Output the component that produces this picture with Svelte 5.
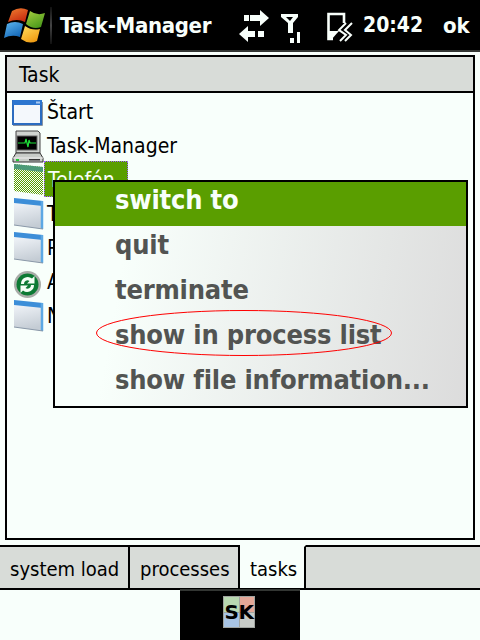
<script>
  const rows = [
    { icon: 'win', label: 'Štart' },
    { icon: 'pc', label: 'Task-Manager' },
    { icon: 'sel', label: 'Telefón', selected: true },
    { icon: 'page', label: 'T' },
    { icon: 'page', label: 'P' },
    { icon: 'sync', label: 'A' },
    { icon: 'page', label: 'N' }
  ];
  const items = ['quit', 'terminate', 'show in process list', 'show file information...'];
</script>

<div class="screen">
  <header class="top">
    <svg class="logo" width="50" height="50" viewBox="0 0 50 50">
      <defs>
        <linearGradient id="lr" x1="0" y1="0" x2="0.6" y2="1"><stop offset="0" stop-color="#f08030" /><stop offset="1" stop-color="#c82c10" /></linearGradient>
        <linearGradient id="lg" x1="0" y1="0" x2="0.6" y2="1"><stop offset="0" stop-color="#a8d040" /><stop offset="1" stop-color="#4c9a1c" /></linearGradient>
        <linearGradient id="lb" x1="0" y1="0" x2="0.6" y2="1"><stop offset="0" stop-color="#60b8f0" /><stop offset="1" stop-color="#1468b8" /></linearGradient>
        <linearGradient id="ly" x1="0" y1="0" x2="0.6" y2="1"><stop offset="0" stop-color="#ffe060" /><stop offset="1" stop-color="#f09c14" /></linearGradient>
      </defs>
      <path d="M12 11 Q20 6 28 10 L25 22 Q17 18 8 22Z" fill="url(#lr)" />
      <path d="M30 11 Q37 16 45 13 L41 27 Q33 30 26 24Z" fill="url(#lg)" />
      <path d="M7 24 Q15 20 23 24 L20 37 Q12 34 4 38Z" fill="url(#lb)" />
      <path d="M25 26 Q32 31 40 29 L37 41 Q29 45 21 39Z" fill="url(#ly)" />
    </svg>
    <i class="sep"></i>
    <h1>Task-Manager</h1>
    <svg class="arrows" width="32" height="36" viewBox="0 0 32 36" fill="#f8fffb">
      <path d="M6 8 H11 V14 H6Z M12 8 H22 V3 L31 11 L22 19 V14 H12Z" />
      <path d="M1 27 L10 19 V24 H17 V30 H10 V35Z M20 24 H26 V30 H20Z" />
    </svg>
    <svg class="signal" width="22" height="36" viewBox="0 0 22 36" fill="#f8fffb">
      <path d="M1 7 H18 V10 L13 16 V26 H8 V16 L1 10Z M6 10 L10 14 L13 10Z" fill-rule="evenodd" />
      <rect x="10" y="31" width="4" height="5" />
      <rect x="17" y="25" width="3" height="11" />
    </svg>
    <svg class="batt" width="28" height="36" viewBox="0 0 28 36" fill="none">
      <path d="M19 16 V7 H3.500 V32 H8" stroke="#f8fffb" stroke-width="2.600" />
      <path d="M3 24 H14 L6 33 H3Z" fill="#f8fffb" />
      <path d="M21 16 L14 23 L21 28 L15 34 M27 16 L20 23 L26 28 L20 34" stroke="#f8fffb" stroke-width="2" />
    </svg>
    <span class="clock">20:42</span>
    <span class="ok">ok</span>
  </header>

  <section class="panel">
    <div class="head">Task</div>
    <ul class="tree">
      {#each rows as r}
        <li>
          <span class="ic">
            {#if r.icon === 'win'}
              <svg width="32" height="34" viewBox="0 0 32 34">
                <rect x="1" y="6" width="28" height="23" fill="#f4f8fc" stroke="#2c6cc0" stroke-width="2" />
                <rect x="1" y="5" width="29" height="5" fill="#2c76d0" />
                <rect x="24" y="6.500" width="4" height="2" fill="#a8c8f0" />
                <path d="M1 30.500 H30.500 V7" stroke="#8a94a0" fill="none" />
              </svg>
            {:else if r.icon === 'pc'}
              <svg width="32" height="34" viewBox="0 0 32 34">
                <path d="M4 2 H26 L28 4 V24 H4Z" fill="#d0d4d0" stroke="#444" />
                <rect x="5" y="7" width="20" height="14" fill="#000" stroke="#666" />
                <path d="M6 14 H13 L14 10 L16 18 L17 11 L18 14 H24" stroke="#1fe03a" stroke-width="1.200" fill="none" />
                <path d="M1 29 L4 24 H28 L31 29 V33 H1Z" fill="#c8ccc8" stroke="#333" />
                <path d="M1 29 H31" stroke="#f0f0f0" />
                <rect x="4" y="30" width="3" height="2" fill="#2c3" />
                <rect x="17" y="30" width="11" height="1.500" fill="#333" />
              </svg>
            {:else if r.icon === 'sel'}
              <svg width="32" height="34" viewBox="0 0 32 34">
                <defs>
                  <pattern id="dots" width="2" height="2" patternUnits="userSpaceOnUse">
                    <rect width="2" height="2" fill="#f8fffb" />
                    <rect width="1" height="1" fill="#5a9e00" />
                    <rect x="1" y="1" width="1" height="1" fill="#5a9e00" />
                  </pattern>
                </defs>
                <path d="M2 1 L31 4 V32 L2 28Z" fill="url(#dots)" />
                <path d="M2 1 L31 4 V9 L2 6Z" fill="#4c9a78" />
              </svg>
            {:else if r.icon === 'page'}
              <svg width="32" height="34" viewBox="0 0 32 34">
                <defs>
                  <linearGradient id="pg" x1="0" y1="0" x2="0.2" y2="1">
                    <stop offset="0" stop-color="#f8fbff" />
                    <stop offset="1" stop-color="#c4ccd4" />
                  </linearGradient>
                </defs>
                <path d="M2 1 L31 4 V32 L2 28Z" fill="url(#pg)" />
                <path d="M2 1 L31 4 V9 L2 6Z" fill="#3c8ed8" />
                <path d="M30 4 V32" stroke="#5ca8e4" stroke-width="2.500" />
                <path d="M2 28 L31 32" stroke="#8a98a8" />
              </svg>
            {:else}
              <svg width="32" height="34" viewBox="0 0 32 34">
                <circle cx="15.500" cy="19.500" r="13.500" fill="#a8aca8" />
                <circle cx="15.500" cy="19.500" r="11" fill="#0c7a34" />
                <path d="M9 19 A6.800 6.800 0 0 1 20 13.500 L22.500 11 V18.500 H15 L17.500 16 A3.500 3.500 0 0 0 12 19Z" fill="#f4fff6" />
                <path d="M22 20 A6.800 6.800 0 0 1 11 25.500 L8.500 28 V20.500 H16 L13.500 23 A3.500 3.500 0 0 0 19 20Z" fill="#f4fff6" />
              </svg>
            {/if}
          </span>
          <span class="label" class:selected={r.selected}>{r.label}</span>
        </li>
      {/each}
    </ul>

    <div class="menu">
      <div class="item active">switch to</div>
      {#each items as it}
        <div class="item">{it}</div>
      {/each}
      <svg class="ring" width="296" height="46" viewBox="0 0 296 46">
        <ellipse cx="148" cy="23" rx="147.500" ry="22.500" fill="none" stroke="#f00" stroke-width="1" />
      </svg>
    </div>
  </section>

  <nav class="tabs">
    <span class="tab w1">system load</span>
    <span class="tab w2">processes</span>
    <span class="tab w3 on">tasks</span>
    <span class="rest"></span>
  </nav>

  <footer class="sip">
    <span class="sk">
      <b class="q1"></b><b class="q2"></b><b class="q3"></b><b class="q4"></b>
      <em>SK</em>
    </span>
  </footer>
</div>

<style>
  :global(body) { margin: 0; }
  .screen {
    width: 480px;
    height: 640px;
    background: #f8fffb;
    display: flex;
    flex-direction: column;
    overflow: hidden;
    font-family: "DejaVu Sans Condensed", "DejaVu Sans", sans-serif;
    color: #000;
  }
  .top {
    height: 50px;
    flex: none;
    background: #000;
    border-bottom: 2px solid #333633;
    display: flex;
    align-items: center;
    color: #f8fffb;
    font-weight: 700;
  }
  .logo { flex: none; }
  .sep { width: 2px; height: 37px; background: linear-gradient(#111, #444 50%, #111); flex: none; }
  h1 {
    margin: 0 0 0 8px;
    font-size: 22px;
    letter-spacing: -0.33px;
    font-weight: 700;
    width: 178px;
    flex: none;
    white-space: nowrap;
  }
  .arrows { flex: none; }
  .signal { margin-left: 10px; flex: none; }
  .batt { margin-left: 23px; flex: none; }
  .clock { margin-left: 10px; font-size: 21px; width: 70px; flex: none; }
  .ok { margin-left: 10px; font-size: 22px; }

  .panel {
    position: relative;
    margin: 3px 5px 0;
    height: 481px;
    flex: none;
    border: 2px solid #000;
  }
  .head {
    height: 34px;
    background: #d8dcd8;
    border-bottom: 2px solid #000;
    padding-left: 12px;
    font-size: 21px;
    line-height: 37px;
  }
  .tree { list-style: none; margin: 0; padding: 2px 0 0 5px; }
  .tree li { height: 34px; display: flex; align-items: center; font-size: 21px; }
  .ic { width: 32px; height: 34px; flex: none; margin-right: 2px; }
  .ic svg { display: block; overflow: visible; }
  .label { padding: 0 4px 0 1px; line-height: 34px; }
  .selected {
    background: #5a9e00;
    color: #f8fffb;
    outline: 1px dotted #a060ff;
    outline-offset: -1px;
    box-sizing: border-box;
    margin-left: -2px;
    margin-top: -2px;
    padding-left: 4px;
    width: 84px;
    height: 36px;
    line-height: 38px;
  }

  .menu {
    position: absolute;
    left: 46px;
    top: 123px;
    width: 411px;
    height: 224px;
    border: 2px solid #000;
    background: linear-gradient(100deg, #f8fffb 18%, #dcdcdc 100%);
    display: flex;
    flex-direction: column;
  }
  .item {
    height: 45px;
    flex: none;
    padding-left: 60px;
    font-size: 27px;
    letter-spacing: -0.2px;
    font-weight: 700;
    line-height: 37px;
    color: #525452;
    white-space: nowrap;
  }
  .item.active { height: 44px; background: #5a9e00; color: #f8fffb; line-height: 35px; }
  .ring { position: absolute; left: 41px; top: 128px; }

  .tabs {
    margin-top: 5px;
    height: 45px;
    flex: none;
    display: flex;
    font-size: 20px;
  }
  .tab {
    box-sizing: border-box;
    height: 45px;
    padding-left: 10px;
    background: #d8dcd8;
    border-top: 2px solid #000;
    border-right: 2px solid #000;
    border-bottom: 2px solid #000;
    line-height: 44px;
    white-space: nowrap;
    flex: none;
  }
  .w1 { width: 130px; }
  .w2 { width: 110px; }
  .w3 { width: 66px; }
  .tab.on { background: #f8fffb; border-top-color: #f8fffb; }
  .rest {
    flex: 1;
    box-sizing: border-box;
    background: #d8dcd8;
    border-top: 2px solid #000;
    border-bottom: 2px solid #000;
  }
  .sip {
    width: 120px;
    height: 51px;
    margin-left: 180px;
    margin-top: -1px;
    background: #000;
    border-top: 2px solid #333633;
    box-sizing: border-box;
    display: flex;
    justify-content: center;
    position: relative;
  }
  .sk {
    position: relative;
    margin: 5px 2px 0 0;
    width: 32px;
    height: 32px;
    background: #a0a4a0;
    display: grid;
    grid-template-columns: 1fr 1fr;
    grid-template-rows: 1fr 1fr;
    gap: 1px;
    padding: 1px;
    box-sizing: border-box;
  }
  .sk b { display: block; }
  .q1 { background: #b8d8b0; }
  .q2 { background: #e4a898; }
  .q3 { background: #a8c4e4; }
  .q4 { background: #c8ccc8; }
  .sk em {
    position: absolute;
    inset: 0;
    text-align: center;
    font: 700 20px/33px "DejaVu Sans", sans-serif;
    letter-spacing: -0.5px;
    color: #000;
  }
</style>
